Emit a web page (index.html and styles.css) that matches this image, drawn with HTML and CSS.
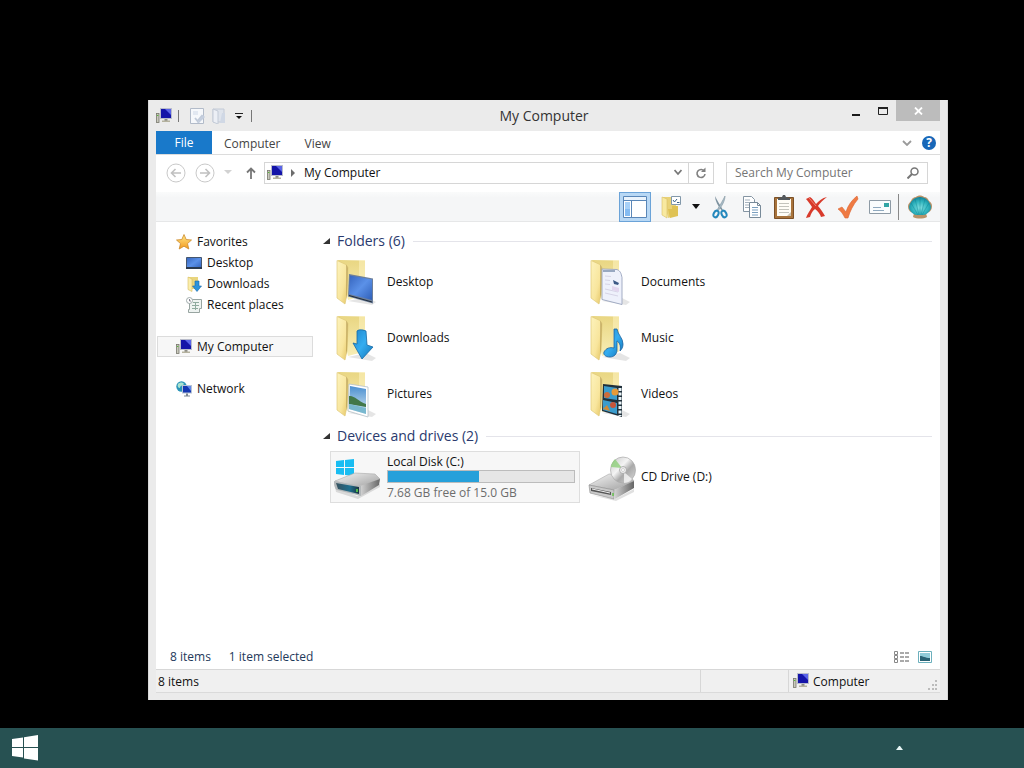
FILE: index.html
```
<!DOCTYPE html>
<html lang="en">
<head>
    <meta charset="UTF-8">
    <meta name="viewport" content="width=device-width, initial-scale=1.0">
    <title>My Computer</title>
    <link rel="stylesheet" href="styles.css">
</head>
<body>
    <!-- shared icons -->
    <svg class="sprite" width="0" height="0" aria-hidden="true">
        <defs>
            <linearGradient id="gFront" x1="0" y1="0" x2="1" y2="1">
                <stop offset="0" stop-color="#fdf3bd"/><stop offset="0.6" stop-color="#f8e59c"/><stop offset="1" stop-color="#e3c25f"/>
            </linearGradient>
            <linearGradient id="gBack" x1="0" y1="0" x2="0" y2="1">
                <stop offset="0" stop-color="#e9d682"/><stop offset="1" stop-color="#f8eeb6"/>
            </linearGradient>
            <linearGradient id="gScreen" x1="0" y1="0" x2="1" y2="1">
                <stop offset="0" stop-color="#3564bd"/><stop offset="0.5" stop-color="#5b91e8"/><stop offset="1" stop-color="#2f5fb8"/>
            </linearGradient>
            <linearGradient id="gArrow" x1="0" y1="0" x2="1" y2="1">
                <stop offset="0" stop-color="#1f86cc"/><stop offset="0.5" stop-color="#35adf0"/><stop offset="1" stop-color="#1173b8"/>
            </linearGradient>
            <linearGradient id="gSky" x1="0" y1="0" x2="0" y2="1">
                <stop offset="0" stop-color="#4a8fd0"/><stop offset="1" stop-color="#dcecf5"/>
            </linearGradient>
            <linearGradient id="gMetal" x1="0" y1="0" x2="1" y2="1">
                <stop offset="0" stop-color="#f5f5f5"/><stop offset="1" stop-color="#9d9d9d"/>
            </linearGradient>
            <linearGradient id="gSide" x1="0" y1="0" x2="1" y2="0">
                <stop offset="0" stop-color="#d5d5d5"/><stop offset="1" stop-color="#666"/>
            </linearGradient>
            <linearGradient id="gDiskFront" x1="0" y1="0" x2="1" y2="0">
                <stop offset="0" stop-color="#38515e"/><stop offset="0.6" stop-color="#1f6f8e"/><stop offset="1" stop-color="#1a3440"/>
            </linearGradient>
            <linearGradient id="gCd" x1="0" y1="0" x2="1" y2="1">
                <stop offset="0" stop-color="#c6c6c6"/><stop offset="0.4" stop-color="#f4f4f4"/><stop offset="0.6" stop-color="#a9a9a9"/><stop offset="1" stop-color="#dcdcdc"/>
            </linearGradient>
            <linearGradient id="gStar" x1="0" y1="0" x2="0" y2="1">
                <stop offset="0" stop-color="#ffe98a"/><stop offset="1" stop-color="#f49a1c"/>
            </linearGradient>
            <radialGradient id="gShell" cx="0.5" cy="0.6" r="0.6">
                <stop offset="0" stop-color="#7fe0e2"/><stop offset="0.6" stop-color="#2fb3bd"/><stop offset="1" stop-color="#128098"/>
            </radialGradient>

            <symbol id="computer" viewBox="0 0 16 16">
                <rect x="0.5" y="5.5" width="2.5" height="9" fill="#c9c9bd" stroke="#77776c" stroke-width="0.8"/>
                <rect x="1" y="7" width="1.4" height="1" fill="#58b93b"/>
                <rect x="4" y="0" width="12" height="11" fill="#b9bccb"/>
                <rect x="5" y="1" width="10" height="9" fill="#1414a8"/>
                <path d="M9 1h6v6z" fill="#5a64e8"/>
                <path d="M8.500 11h3v2h-3z" fill="#8d8d86"/>
                <path d="M6 12.500h8V14H6z" fill="#b5b29f"/>
            </symbol>

            <symbol id="folder" viewBox="0 0 48 48">
                <path d="M14 43l24 4 4-3-10-5z" fill="#000" opacity="0.1"/>
                <path d="M4 2l27 0.500v35L14 42z" fill="url(#gBack)"/>
                <path d="M25 2h6v36l-6 1z" fill="#fff6c6" opacity="0.5"/>
                <path d="M3 2.500l9 4 2 3-1 27-2 9.500-8-6z" fill="url(#gFront)" stroke="#e0c878" stroke-width="0.7"/>
                <path d="M12 6.500l2 3-1 27-1 4z" fill="#a58b44" opacity="0.5"/>
            </symbol>

            <symbol id="note-page" viewBox="0 0 16 16">
                <path d="M1.500 0.500h13v15h-13z" fill="#f6f8fb" stroke="#b2bbc9"/>
                <path d="M4 3h5v4h-5z" fill="#e2e8f1"/>
                <path d="M8 15l6-8 2 2-6 6z" fill="#c4cede"/>
                <path d="M6 10l2.500 3 5-6" fill="none" stroke="#c0cad9" stroke-width="1.800"/>
            </symbol>
        </defs>
    </svg>

    <div class="desktop">
        <div class="window">

            <header class="titlebar">
                <div class="quick">
                    <svg class="i16"><use href="#computer"/></svg>
                    <span class="bar"></span>
                    <button class="quick-btn" aria-label="Properties"><svg class="i16"><use href="#note-page"/></svg></button>
                    <button class="quick-btn" aria-label="New folder">
                        <svg class="i16" viewBox="0 0 16 16"><path d="M2 1h11v13H2z" fill="#dfe4ec" stroke="#c3cad6"/><path d="M2 1l5 2v13l-5-2z" fill="#eceff5" stroke="#c3cad6"/><path d="M11 5h3v10H9z" fill="#d0d8e5"/></svg>
                    </button>
                    <button class="quick-btn caret" aria-label="Customize">
                        <svg width="8" height="8" viewBox="0 0 8 8"><path d="M0 1.500h8" stroke="#222"/><path d="M1 4h6L4 7z" fill="#111"/></svg>
                    </button>
                    <span class="bar"></span>
                </div>
                <h1>My Computer</h1>
                <div class="controls">
                    <button aria-label="Minimize"><svg width="8" height="12"><path d="M0 9h8v2H0z" fill="#1a1a1a"/></svg></button>
                    <button aria-label="Maximize"><svg width="10" height="8"><path d="M0.500 0.500h9v7h-9z" fill="none" stroke="#222"/><path d="M0 0h10v2H0z" fill="#222"/></svg></button>
                    <button class="close" aria-label="Close"><svg width="9" height="8"><path d="M1 0.500l7 7M8 0.500l-7 7" stroke="#fff" stroke-width="1.800"/></svg></button>
                </div>
            </header>

            <nav class="tabs">
                <button class="tab file">File</button>
                <button class="tab">Computer</button>
                <button class="tab">View</button>
                <div class="tabs-end">
                    <button aria-label="Expand ribbon"><svg width="10" height="6"><path d="M1 1l4 4 4-4" fill="none" stroke="#9a9a9a" stroke-width="1.800"/></svg></button>
                    <button class="help" aria-label="Help">?</button>
                </div>
            </nav>

            <div class="address-row">
                <button aria-label="Back"><svg width="20" height="20" viewBox="0 0 20 20"><circle cx="10" cy="10" r="9" fill="none" stroke="#c9c9c9"/><path d="M15 10H6M9.500 6L5.500 10l4 4" fill="none" stroke="#c0c0c0" stroke-width="1.600"/></svg></button>
                <button aria-label="Forward"><svg width="20" height="20" viewBox="0 0 20 20"><circle cx="10" cy="10" r="9" fill="none" stroke="#c9c9c9"/><path d="M5 10h9M10.500 6l4 4-4 4" fill="none" stroke="#c0c0c0" stroke-width="1.600"/></svg></button>
                <button class="recent" aria-label="Recent locations"><svg width="8" height="5"><path d="M0 0h8L4 4z" fill="#d2d2d2"/></svg></button>
                <button class="up" aria-label="Up"><svg width="10" height="12" viewBox="0 0 10 12"><path d="M5 12V1.500M1 5.500l4-4 4 4" fill="none" stroke="#777" stroke-width="1.800"/></svg></button>
                <div class="address">
                    <svg class="i16"><use href="#computer"/></svg>
                    <svg class="crumb" width="5" height="8"><path d="M0 0l4 4-4 4z" fill="#6d6d6d"/></svg>
                    <a href="#">My Computer</a>
                    <button class="drop" aria-label="Previous locations"><svg width="8" height="7"><path d="M0.500 1L4 5l3.500-4" fill="none" stroke="#777" stroke-width="1.800"/></svg></button>
                    <button class="refresh" aria-label="Refresh"><svg width="12" height="12" viewBox="0 0 12 12"><path d="M9.500 4.500A4 4 0 1 0 10 7" fill="none" stroke="#808080" stroke-width="1.600"/><path d="M6 5h4.500V0.500z" fill="#808080"/></svg></button>
                </div>
                <div class="search">
                    <input type="text" aria-label="Search" placeholder="Search My Computer">
                    <svg width="12" height="12" viewBox="0 0 12 12"><circle cx="7.500" cy="4.500" r="3.500" fill="none" stroke="#777" stroke-width="1.500"/><path d="M5 7L0.500 11.500" stroke="#777" stroke-width="2"/></svg>
                </div>
            </div>

            <div class="toolbar">
                <button class="active" aria-label="Navigation pane">
                    <svg class="i24" viewBox="0 0 24 24"><path d="M0.500 1.500h23v21h-23z" fill="#fff" stroke="#5a87b8"/><path d="M1 2h22v3H1z" fill="#eaf3fc"/><path d="M1 5.500h22M8.500 6v16" stroke="#5a87b8"/><path d="M2 7h5v14H2z" fill="#a8d1f8"/><path d="M2 14h5v7H2z" fill="#85bcf2"/></svg>
                </button>
                <button class="organize" aria-label="Folder options">
                    <svg class="i24" viewBox="0 0 24 24"><path d="M4 2h12l2 18-9 3z" fill="#e9d277"/><path d="M3 2l5 2v19l-5-3z" fill="#f8e9a0" stroke="#d8bf66" stroke-width="0.600"/><path d="M9 14h4v-3h6v10l-8 2z" fill="#dfc254"/><path d="M12.500 1.500h9v8h-9z" fill="#fff" stroke="#8298aa"/><path d="M14 5l1.500 2L18 4M18 7.500h2.500" fill="none" stroke="#3a648c"/></svg>
                </button>
                <button class="more" aria-label="More options"><svg width="8" height="5"><path d="M0 0h8L4 5z" fill="#111"/></svg></button>
                <button aria-label="Cut">
                    <svg class="i24" viewBox="0 0 24 24"><path d="M7 1c0 5 3 10 7 15l1-1C12 10 9 5 7 1z" fill="#7d929f"/><path d="M17 1c0 5-3 10-7 15l-1-1c3-5 6-10 8-14z" fill="#a7bac5" stroke="#738894" stroke-width="0.500"/><ellipse cx="8" cy="19" rx="2.300" ry="3.500" transform="rotate(25 8 19)" fill="none" stroke="#2488bd" stroke-width="2"/><ellipse cx="16" cy="19" rx="2.300" ry="3.500" transform="rotate(-25 16 19)" fill="none" stroke="#2488bd" stroke-width="2"/></svg>
                </button>
                <button aria-label="Copy">
                    <svg class="i24" viewBox="0 0 24 24"><path d="M3.500 1.500h8l3 3v12h-11z" fill="#fff" stroke="#8595a3"/><path d="M5 5h5M5 7.500h4M5 10h4M5 12.500h4" stroke="#a5b1bd"/><path d="M9.500 7.500h8l3 3v12h-11z" fill="#fff" stroke="#788a99"/><path d="M17.500 7.500v3h3" fill="none" stroke="#788a99"/><path d="M12 12.500h6M12 15h6M12 17.500h6M12 20h6" stroke="#7ba0c0"/></svg>
                </button>
                <button aria-label="Paste">
                    <svg class="i24" viewBox="0 0 24 24"><path d="M2.500 2.500h19v21h-19z" fill="#a8733b" stroke="#7b5027"/><path d="M5 4h14v17H5z" fill="#fffdf6"/><path d="M7 8.500h10M7 11.500h10M7 14.500h10M7 17.500h10" stroke="#c4c4bc"/><path d="M15 21l4-4v4z" fill="#c9c2b0"/><path d="M6 3l4-1 1-2h2l1 2 4 1v2H6z" fill="#53585c"/></svg>
                </button>
                <button aria-label="Delete">
                    <svg class="i24" viewBox="0 0 24 24"><path d="M2 4l4-2c3 2 4 4 6 7 3-3 6-6 11-7-4 3-7 6-9 9 3 3 5 7 7 10l-4 1c-1-3-3-6-6-8-3 2-4 5-5 8l-4 1c1-4 4-7 6-11C6 9 4 6 2 4z" fill="#d83a2b"/><path d="M5 3l7 8" stroke="#f08476" fill="none"/></svg>
                </button>
                <button aria-label="Rename">
                    <svg class="i24" viewBox="0 0 24 24"><path d="M2 14l4-2 4 5C12 10 16 5 21 1l1 3c-5 6-8 12-10 19H9c-2-4-4-7-7-9z" fill="#ef7a43" stroke="#dc6634" stroke-width="0.600"/></svg>
                </button>
                <button aria-label="E-mail">
                    <svg class="i24" viewBox="0 0 24 24"><path d="M1.500 5.500h21v13h-21z" fill="#fafcfd" stroke="#8d9aa5"/><path d="M16 8h5v4h-5z" fill="#33a5a5"/><path d="M5 12.500h8M5 15.500h11" stroke="#8fa9bf"/></svg>
                </button>
                <span class="bar"></span>
                <button class="shell" aria-label="Classic Shell">
                    <svg class="i24" viewBox="0 0 24 24"><path d="M6 18C1 17 0 14 0 11c0-2 2-4 3-5 1-3 3-4 5-4 2-2 6-2 8 0 3 0 4 2 5 4 2 1 3 3 3 5 0 3-1 6-6 7l1 4c-4 2-10 2-14 0z" fill="#b99268"/><path d="M8 20C4 19 1 15 1 12 2 6 7 2 12 2s10 4 11 10c0 3-3 7-7 8z" fill="url(#gShell)"/><path d="M12 20V2M11 20L7 4M13 20l4-16M10 20L3 8M14 20l7-12" stroke="#0d7f8e" stroke-width="0.800" opacity="0.500"/></svg>
                </button>
            </div>

            <div class="panes">
                <aside class="sidebar">
                    <a href="#">
                        <svg class="i16" viewBox="0 0 16 16"><path d="M8 0.500l2.200 5 5.300 0.500-4 3.600 1.300 5.400L8 12.200 3.200 15l1.300-5.400-4-3.600 5.300-0.500z" fill="url(#gStar)" stroke="#cc8a2c" stroke-width="0.800"/></svg>
                        Favorites
                    </a>
                    <a href="#" class="sub">
                        <svg class="i16" viewBox="0 0 16 16"><path d="M0.500 2.500h15v11h-15z" fill="url(#gScreen)" stroke="#45566e"/><path d="M0 12h16v2H0z" fill="#2b3a4e"/></svg>
                        Desktop
                    </a>
                    <a href="#" class="sub">
                        <svg class="i16" viewBox="0 0 16 16"><path d="M2 1h10v12H4z" fill="#e9d57e"/><path d="M2 1l4 2v12.500l-4-2z" fill="#fbeeab" stroke="#d6bd62" stroke-width="0.600"/><path d="M9 5h4v5h2.500L11 15.500 6.500 10H9z" fill="#2b93dc" stroke="#1668a8" stroke-width="0.600"/></svg>
                        Downloads
                    </a>
                    <a href="#" class="sub">
                        <svg class="i16" viewBox="0 0 16 16"><path d="M3.500 2.500h12v9h-2v4h-11v-3h1z" fill="#eef3f1" stroke="#98a5a1"/><path d="M7 5.500h6M6 8.500h7M6 11.500h6M9.500 5v8" stroke="#8fab9f"/><circle cx="3.500" cy="3.500" r="3" fill="#fff" stroke="#a0abab"/><path d="M3.500 2v2H5" fill="none" stroke="#667" stroke-width="0.800"/></svg>
                        Recent places
                    </a>
                    <a href="#" class="section selected">
                        <svg class="i16"><use href="#computer"/></svg>
                        My Computer
                    </a>
                    <a href="#" class="section">
                        <svg class="i16" viewBox="0 0 16 16"><circle cx="5.500" cy="5.500" r="5.200" fill="#2a94b8"/><path d="M2 3c2-2 5-2 6 0-1 2-4 1-4 4-2 0-3-2-2-4z" fill="#a9e3d0"/><path d="M6 4h10v8.500H6z" fill="#b7c3d4"/><path d="M7 5h8v6.500H7z" fill="#1537b3"/><path d="M11 5h4v5z" fill="#6087ea"/><path d="M10 12.500h2v2h2v1H8v-1h2z" fill="#7c8794"/></svg>
                        Network
                    </a>
                </aside>

                <main class="content">
                    <h2><svg width="7" height="7"><path d="M7 0v6H0z" fill="#333"/></svg><span>Folders (6)</span></h2>
                    <div class="items">
                        <a href="#" class="item">
                            <svg class="i48" viewBox="0 0 48 48"><use href="#folder"/><path d="M15 16l24 4.500v25l-25-7z" fill="#6d7f9a"/><path d="M16 17.500l22 4V42l-23-6z" fill="url(#gScreen)"/><path d="M15 37l23 6.500v1L15 38z" fill="#1f2c3b"/></svg>
                            Desktop
                        </a>
                        <a href="#" class="item">
                            <svg class="i48" viewBox="0 0 48 48"><use href="#folder"/><path d="M14 11l15 0.500c4 2 4 4 5 8v27l-20-5z" fill="#eef1fb" stroke="#98a4bd" stroke-width="0.900"/><path d="M15 13h12" stroke="#5f789b" stroke-width="1.200"/><path d="M17 18l6 0.500M17 22l5 0.500M17 26l5 0.500M17 31l13 3M17 35l13 3" stroke="#d6d4e6"/><path d="M25 22l6 3-1 2-4-1z" fill="#3c5a86"/><path d="M24 28l7 2v4l-7-2z" fill="#e2d6ee"/></svg>
                            Documents
                        </a>
                        <a href="#" class="item">
                            <svg class="i48" viewBox="0 0 48 48"><use href="#folder"/><path d="M23 17c2-2 7-1 9 0l1 14 6 2-11 12-9-16 4 1z" fill="url(#gArrow)" stroke="#176aa5" stroke-width="0.800"/></svg>
                            Downloads
                        </a>
                        <a href="#" class="item">
                            <svg class="i48" viewBox="0 0 48 48"><use href="#folder"/><path d="M26 15h3c1 6 6 9 6 15 0 3-1 5-3 7 1-6-1-9-3-10v9c0 4-3 7-7 7-5 0-7-3-6-5 2-4 6-5 10-4z" fill="url(#gArrow)" stroke="#1a619e" stroke-width="0.800"/></svg>
                            Music
                        </a>
                        <a href="#" class="item">
                            <svg class="i48" viewBox="0 0 48 48"><use href="#folder"/><path d="M15 14l19 3v30l-20-6z" fill="#fff" stroke="#b5c0c8" stroke-width="0.800"/><path d="M16 16l16 3v25l-17-5z" fill="url(#gSky)"/><path d="M15 26c5-1 9 5 17 8v3l-17-3z" fill="#42784a"/><path d="M15 34l17 4v6l-17-5z" fill="#79b8cf"/></svg>
                            Pictures
                        </a>
                        <a href="#" class="item">
                            <svg class="i48" viewBox="0 0 48 48"><use href="#folder"/><path d="M15 14l19 2v31l-20-6z" fill="#20303b"/><path d="M16 16l13 2v12l-13-2zM15 30l14 3v11l-14-4z" fill="#3b9ccd"/><circle cx="19" cy="25" r="3" fill="#cf6b3a"/><circle cx="27" cy="22" r="3.500" fill="#e89a38"/><circle cx="25" cy="35" r="3" fill="#c8553a"/><path d="M15 39l4-4 3 6z" fill="#d18a35"/><path d="M32 18v28" stroke="#e9f3f7" stroke-width="3" stroke-dasharray="3 1.500"/></svg>
                            Videos
                        </a>
                    </div>

                    <h2 class="second"><svg width="7" height="7"><path d="M7 0v6H0z" fill="#333"/></svg><span>Devices and drives (2)</span></h2>
                    <div class="items">
                        <a href="#" class="item selected">
                            <svg class="i48" viewBox="0 0 48 48"><path d="M2 8l8-1v7H2zM11 7l9-1v8h-9zM2 15h8v7l-8-1zM11 15h9v8l-9-1z" fill="#19bdf2"/><path d="M1 34l22 9 23-12v3L24 46 2 39z" fill="#000" opacity="0.120"/><path d="M1 28l20-8 20 1 5 5-20 9z" fill="url(#gMetal)" stroke="#a9a9a9" stroke-width="0.600"/><path d="M26 33l20-7-1 6-18 11z" fill="url(#gSide)"/><path d="M0 28l27 5v10l-24-6c-3-2-3-6-3-9z" fill="#b4b8ba"/><path d="M2 30l23 4v7L4 36z" fill="url(#gDiskFront)"/><path d="M23 36v3" stroke="#63e04b" stroke-width="1.500"/></svg>
                            <span class="drive">
                                <span>Local Disk (C:)</span>
                                <span class="usage"><span class="used" style="width: 49%"></span></span>
                                <span class="free">7.68 GB free of 15.0 GB</span>
                            </span>
                        </a>
                        <a href="#" class="item">
                            <svg class="i48" viewBox="0 0 48 48"><path d="M3 42l24 4 19-10v3L28 48z" fill="#000" opacity="0.120"/><path d="M1 32l20-11 20 1 5 6-20 9z" fill="url(#gMetal)" stroke="#a9a9a9" stroke-width="0.600"/><path d="M26 37l20-9v7L27 46z" fill="url(#gSide)"/><path d="M1 32l25 5v9L2 40z" fill="#c9c9c9" stroke="#8b8b8b" stroke-width="0.600"/><path d="M3 35l20 4v3L3 38z" fill="#555"/><path d="M4 36l18 4" stroke="#eee"/><path d="M25 40v3" stroke="#63c04b" stroke-width="1.500"/><ellipse cx="35" cy="17" rx="12.500" ry="13" fill="url(#gCd)" stroke="#aaa" stroke-width="0.700"/><path d="M34 15L23 14c0-3 2-6 4-8z" fill="#8fd07a" opacity="0.800"/><path d="M36 19l8 7c-2 3-5 4-8 4z" fill="#fff" opacity="0.700"/><circle cx="35" cy="17" r="3.500" fill="#eee" stroke="#999" stroke-width="0.700"/><circle cx="35" cy="17" r="1.500" fill="#fff" stroke="#aaa" stroke-width="0.500"/></svg>
                            CD Drive (D:)
                        </a>
                    </div>
                </main>
            </div>

            <div class="details">
                <span>8 items</span>
                <span>1 item selected</span>
                <div class="views">
                    <button aria-label="Details view"><svg width="16" height="14" viewBox="0 0 16 14"><path d="M0.500 1.500h3v3h-3zM0.500 5.500h3v3h-3zM0.500 9.500h3v3h-3z" fill="#fff" stroke="#888"/><path d="M6 3h4M11 3h4M6 7h4M11 7h4M6 11h4M11 11h4" stroke="#555"/></svg></button>
                    <button aria-label="Icon view"><svg width="14" height="12" viewBox="0 0 14 12"><path d="M0.500 0.500h13v11h-13z" fill="#fff" stroke="#6cb0bd"/><path d="M2 2h10v8H2z" fill="#8fcbd8"/><path d="M2 5c3 0 5 2 10 2v3H2z" fill="#286173"/></svg></button>
                </div>
            </div>

            <footer class="status">
                <span class="count">8 items</span>
                <span class="blank"></span>
                <span class="zone">
                    <svg class="i16"><use href="#computer"/></svg>
                    Computer
                    <svg class="grip" width="10" height="10"><path d="M7 0h2v2H7zM4 4h2v2H4zM7 4h2v2H7zM0 8h2v2H0zM4 8h2v2H4zM7 8h2v2H7z" fill="#bbb"/></svg>
                </span>
            </footer>
        </div>
    </div>

    <div class="taskbar">
        <button aria-label="Start"><svg width="26" height="26" viewBox="0 0 26 26"><path d="M0 4l11-1.500V12H0zM12 2.300L26 0v12H12zM0 13h11v9.500L0 21zM12 13h14v12.500l-14-2z" fill="#fff"/></svg></button>
        <button class="tray" aria-label="Show hidden icons"><svg width="7" height="4"><path d="M3 0h1l3 4H0z" fill="#e8f6f6"/></svg></button>
    </div>
</body>
</html>
```
FILE: styles.css
```
* {
    box-sizing: border-box;
}
body {
    margin: 0;
    height: 100vh;
    display: flex;
    flex-direction: column;
    background: #000;
    color: #111;
    font-family: "Open Sans", "Noto Sans", sans-serif;
    font-size: 12px;
    line-height: 16px;
}
.sprite {
    position: absolute;
}
svg {
    display: block;
    flex: none;
}
button {
    display: flex;
    align-items: center;
    justify-content: center;
    padding: 0;
    border: none;
    background: none;
    color: inherit;
    font: inherit;
}
a {
    color: inherit;
    text-decoration: none;
}
.i16 {
    width: 16px;
    height: 16px;
}
.i24 {
    width: 24px;
    height: 24px;
}
.i48 {
    width: 48px;
    height: 48px;
}

.desktop {
    position: relative;
    flex: 1;
}
.window {
    position: absolute;
    top: 100px;
    right: 76px;
    bottom: 28px;
    left: 148px;
    display: flex;
    flex-direction: column;
    padding: 0 7px 7px;
    background: #ebebeb;
    border-left: 1px solid #d8d8d8;
    border-right: 1px solid #d8d8d8;
}

/* title bar */
.titlebar {
    display: grid;
    grid-template-columns: 1fr auto 1fr;
    height: 31px;
}
.quick {
    display: flex;
    align-items: center;
    gap: 6px;
}
.quick .bar {
    width: 1px;
    height: 12px;
    background: #777;
}
.quick .bar + .quick-btn {
    margin-left: 4px;
}
.caret {
    width: 12px;
}
.titlebar h1 {
    margin: 0;
    padding-right: 8px;
    font-size: 14px;
    font-weight: 400;
    line-height: 31px;
    color: #333;
}
.controls {
    display: flex;
    justify-content: flex-end;
    align-items: flex-start;
}
.controls button {
    width: 27px;
    height: 21px;
}
.controls .close {
    width: 44px;
    background: #bcbcbc;
}

/* ribbon tabs */
.tabs {
    display: flex;
    height: 24px;
    background: #fff;
    border-bottom: 1px solid #dcdcdc;
}
.tab {
    padding: 2px 12px 0;
    color: #444;
}
.tab.file {
    width: 56px;
    padding-top: 0;
    background: #1979ca;
    color: #fff;
}
.tabs-end {
    display: flex;
    align-items: center;
    gap: 10px;
    margin-left: auto;
    padding-right: 4px;
}
.help {
    width: 14px;
    height: 14px;
    border-radius: 50%;
    background: #1767b8;
    color: #fff;
    font-weight: 700;
}

/* address + search */
.address-row {
    display: flex;
    align-items: center;
    padding: 0 12px 2px 10px;
    height: 37px;
    background: #fff;
}
.address-row > button + button {
    margin-left: 9px;
}
.address-row > .up.up {
    margin: 0 8px 0 14px;
}
.address {
    flex: 1;
    display: flex;
    align-items: center;
    height: 22px;
    padding-left: 2px;
    border: 1px solid #d6d6d6;
}
.crumb {
    margin: 0 8px;
}
.address .drop {
    width: 20px;
    height: 20px;
    margin-left: auto;
}
.address .refresh {
    width: 25px;
    height: 20px;
    border-left: 1px solid #d6d6d6;
}
.search {
    display: flex;
    align-items: center;
    width: 202px;
    height: 22px;
    margin-left: 12px;
    padding: 0 8px;
    border: 1px solid #d6d6d6;
}
.search input {
    flex: 1;
    min-width: 0;
    padding: 0;
    border: none;
    outline: none;
    background: none;
    font: inherit;
}
.search input::placeholder {
    color: #757575;
    opacity: 1;
}

/* toolbar */
.toolbar {
    display: flex;
    align-items: center;
    justify-content: flex-end;
    height: 30px;
    padding-right: 4px;
    background: linear-gradient(#fafbfb, #f5f6f7 20%);
    border-bottom: 1px solid #e6e7e8;
}
.toolbar button {
    width: 32px;
    height: 30px;
}
.toolbar .active {
    background: #b8d8f5;
    border: 1px solid #6ba3d8;
}
.toolbar .organize {
    margin-left: 4px;
}
.toolbar .more {
    width: 17px;
}
.toolbar .bar {
    width: 1px;
    height: 26px;
    margin: 0 5px 0 2px;
    background: #888;
}

/* panes */
.panes {
    flex: 1;
    display: flex;
    min-height: 0;
    background: #fff;
}
.sidebar {
    width: 157px;
    padding: 9px 0 0 1px;
    flex: none;
}
.sidebar a {
    display: flex;
    align-items: center;
    gap: 5px;
    height: 21px;
    padding-left: 18px;
    border: 1px solid transparent;
}
.sidebar .sub {
    padding-left: 28px;
}
.sidebar .section {
    margin-top: 21px;
}
.sidebar .selected {
    background: #f7f7f7;
    border-color: #dcdcdc;
}
.content {
    flex: 1;
    min-width: 0;
    padding: 4px 8px 0 10px;
}
.content h2 {
    display: flex;
    align-items: center;
    margin: 0;
    height: 30px;
    font-size: 14px;
    font-weight: 400;
    color: #2a3a6e;
}
.content h2 span {
    margin: 0 8px 0 7px;
}
.content h2::after {
    content: "";
    flex: 1;
    height: 1px;
    background: #e4e4ea;
}
.content .second {
    margin-top: 1px;
}
.items {
    display: grid;
    grid-template-columns: repeat(auto-fill, 250px);
    gap: 4px;
    padding-left: 7px;
}
.item {
    display: flex;
    align-items: center;
    gap: 5px;
    height: 52px;
    padding: 0 4px 0 3px;
    border: 1px solid transparent;
}
.item.selected {
    background: #f7f7f7;
    border-color: #dedede;
}
.drive {
    flex: 1;
    display: flex;
    flex-direction: column;
}
.usage {
    height: 13px;
    margin-bottom: 2px;
    background: #e6e6e6;
    border: 1px solid #bcbcbc;
}
.used {
    display: block;
    height: 100%;
    background: #26a0da;
}
.free {
    color: #6d6d6d;
}

/* bottom bars */
.details {
    display: flex;
    align-items: center;
    gap: 18px;
    height: 24px;
    padding: 0 8px 0 14px;
    background: #fff;
    color: #1e395b;
}
.views {
    display: flex;
    gap: 8px;
    margin-left: auto;
}
.status {
    display: flex;
    height: 24px;
    background: #f0f0f0;
    border-top: 1px solid #d7d7d7;
    border-bottom: 1px solid #dadada;
    line-height: 23px;
}
.count {
    flex: 1;
    padding-left: 2px;
}
.blank {
    width: 88px;
    border-left: 1px solid #d7d7d7;
}
.zone {
    display: flex;
    align-items: center;
    gap: 4px;
    width: 152px;
    padding-left: 4px;
    border-left: 1px solid #d7d7d7;
}
.grip {
    align-self: flex-end;
    margin: 0 2px 2px auto;
}

/* taskbar */
.taskbar {
    display: flex;
    align-items: center;
    justify-content: space-between;
    height: 40px;
    padding: 0 121px 0 12px;
    background: #275152;
}
```
